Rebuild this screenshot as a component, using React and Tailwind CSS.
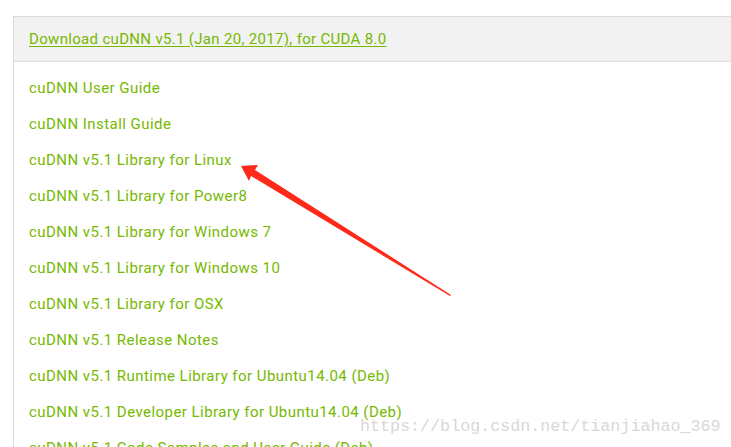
import React from "react";

const items = [
  "cuDNN User Guide",
  "cuDNN Install Guide",
  "cuDNN v5.1 Library for Linux",
  "cuDNN v5.1 Library for Power8",
  "cuDNN v5.1 Library for Windows 7",
  "cuDNN v5.1 Library for Windows 10",
  "cuDNN v5.1 Library for OSX",
  "cuDNN v5.1 Release Notes",
  "cuDNN v5.1 Runtime Library for Ubuntu14.04 (Deb)",
  "cuDNN v5.1 Developer Library for Ubuntu14.04 (Deb)",
  "cuDNN v5.1 Code Samples and User Guide (Deb)",
];

export default function App() {
  return (
    <div className="relative w-[731px] h-[447px] overflow-hidden bg-white pt-[16px] pl-[13px] font-['Roboto',sans-serif]">
      <div className="w-[740px] border-l border-t border-[#dcdcdc]">
        <div className="h-[45px] bg-[#f2f2f2] border-b border-[#dcdcdc] flex items-center pl-[15px]">
          <a className="text-[15px] tracking-[0.32px] text-[#76b900] underline underline-offset-2 decoration-[#76b900]">
            Download cuDNN v5.1 (Jan 20, 2017), for CUDA 8.0
          </a>
        </div>
        <ul className="pt-[8px] pl-[15px]">
          {items.map((t) => (
            <li key={t} className="h-[36px] flex items-center whitespace-nowrap text-[15px] tracking-[0.45px] text-[#76b900]">
              {t}
            </li>
          ))}
        </ul>
      </div>
      <svg className="absolute left-0 top-0" width="731" height="447" viewBox="0 0 731 447">
        <polygon
          points="241,166 258,165 255,170 451,295 450,296 251,176 249,181"
          fill="#ff2a1a"
        />
      </svg>
      <div className="absolute left-[360px] top-[415px] text-[16.7px] leading-[24px] text-[#d8d8d8] font-['Liberation_Mono',monospace]">
        https://blog.csdn.net/tianjiahao_369
      </div>
    </div>
  );
}
